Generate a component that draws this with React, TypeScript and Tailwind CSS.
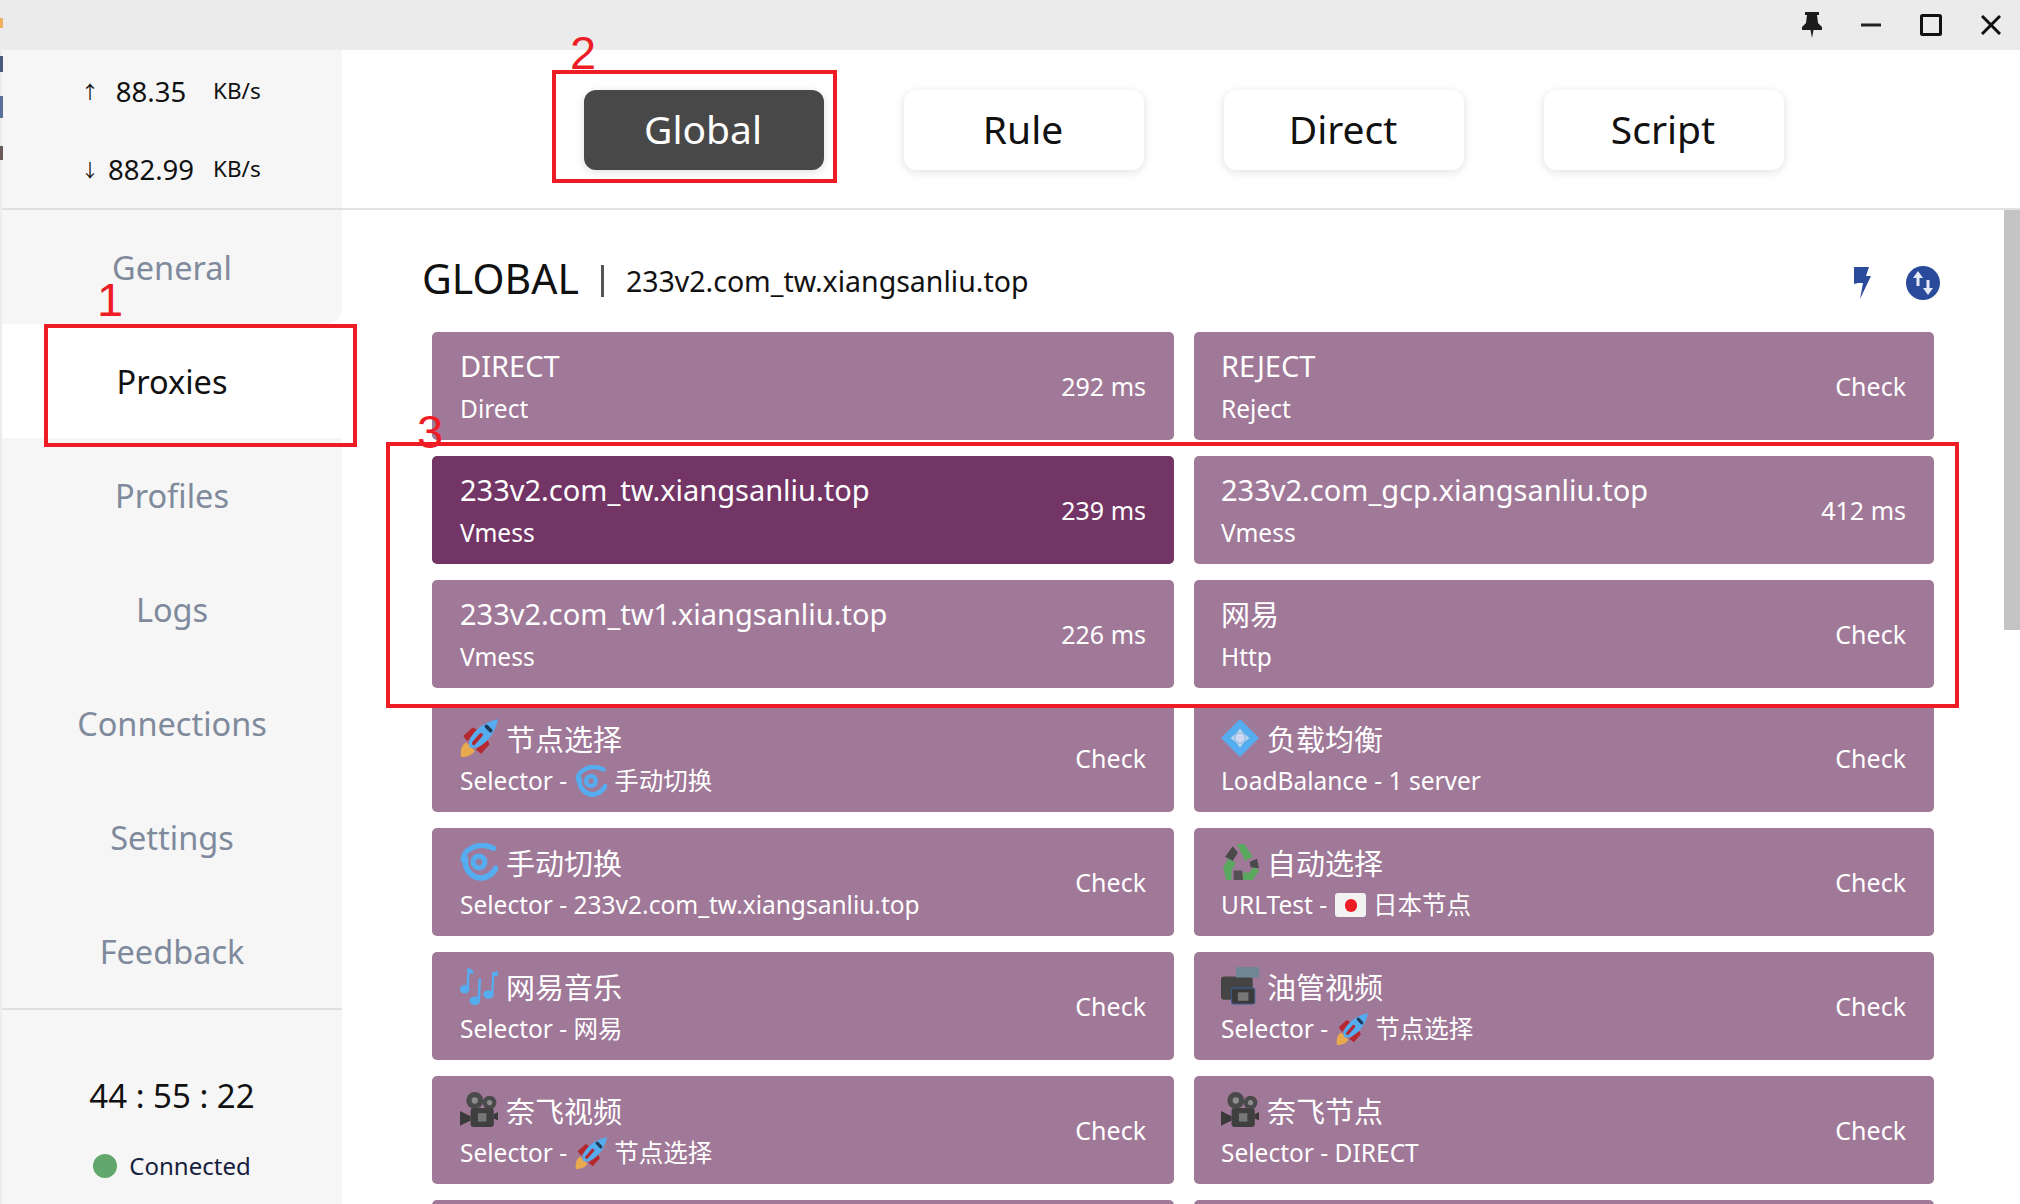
import React from "react";

const Rocket = ({ s }: { s: number }) => (
  <svg width={s} height={s} viewBox="0 0 36 36" className="shrink-0">
    <path d="M1 36c-1-7 1-12 5-14l8 8c-2 4-7 6-13 6z" fill="#e8a94f" />
    <path d="M3 16l9-8 4 2-9 11zM20 33l8-9-2-4-11 9z" fill="#b5282f" />
    <path d="M9 27C6 17 19 4 36 0 33 17 19 30 9 27z" fill="#55acee" />
    <path d="M25 7l4 4" stroke="#1f3b57" strokeWidth="3.500" strokeLinecap="round" />
    <path d="M13 23l7-8" stroke="#b5282f" strokeWidth="3.500" strokeLinecap="round" />
  </svg>
);
const Cyclone = ({ s }: { s: number }) => (
  <svg width={s} height={s} viewBox="0 0 36 36" className="shrink-0" fill="none" stroke="#55acee">
    <circle cx="18" cy="18" r="5.500" strokeWidth="5" />
    <path d="M3 16C3 6 18-2 32 5" strokeWidth="5" strokeLinecap="round" />
    <path d="M5 15c-1 12 8 19 17 18 5-1 9-4 12-9" strokeWidth="5.500" strokeLinecap="round" />
  </svg>
);
const Diamond = ({ s }: { s: number }) => (
  <svg width={s} height={s} viewBox="0 0 36 36" className="shrink-0">
    <path d="M18 0l18 18-18 18L0 18z" fill="#55acee" />
    <path d="M18 9l4 5 5 4-5 4-4 5-4-5-5-4 5-4z" fill="#b9d4ee" />
    <circle cx="18" cy="18" r="5" fill="#cfd8ee" stroke="#8bb8e0" />
  </svg>
);
const Recycle = ({ s }: { s: number }) => (
  <svg width={s} height={s} viewBox="0 0 36 36" className="shrink-0">
    <path d="M15 1l7 0 8 12-7 4z" fill="#5aa85f" />
    <path d="M11 3l5 6-5 8-7-4z" fill="#4a4a4a" />
    <path d="M2 23l5-8 7 4-4 7 0 9-5 0z" fill="#5aa85f" />
    <path d="M12 26l0 9 9 0-1-9z" fill="#4a4a4a" opacity="0.9" />
    <path d="M21 35l9 0 6-9-5-4-4 6-6 0z" fill="#5aa85f" />
    <path d="M27 18l7-3 2 9-8-1z" fill="#4a4a4a" />
  </svg>
);
const Notes = ({ s }: { s: number }) => (
  <svg width={s} height={s} viewBox="0 0 36 36" className="shrink-0">
    <g fill="#55acee">
      <ellipse cx="4.500" cy="21" rx="4.500" ry="4" />
      <path d="M6 21L7 1c3 0 6 2 6 6-2-1-3-1-4-1L8.500 21z" />
      <ellipse cx="14" cy="32" rx="5" ry="4" />
      <path d="M16.500 32l1-21 2.500 0-1 21z" />
      <ellipse cx="27" cy="26" rx="5" ry="4" />
      <path d="M29.500 26l1-21c2 0 3-1 5.500-1l0 4-3.500 1-1 17z" />
    </g>
  </svg>
);
const MovieCam = ({ s }: { s: number }) => (
  <svg width={s} height={s} viewBox="0 0 36 36" className="shrink-0">
    <circle cx="14" cy="9" r="8" fill="#4a4a4a" />
    <circle cx="28" cy="11" r="6.500" fill="#4a4a4a" />
    <circle cx="14" cy="9" r="3" fill="#8c8c8c" />
    <circle cx="28" cy="11" r="2.500" fill="#8c8c8c" />
    <rect x="10" y="16" width="22" height="18" rx="3" fill="#3f3f3f" />
    <rect x="17" y="21" width="8" height="8" fill="#777" />
    <path d="M0 19l10 5v4l-10 5z" fill="#3a3a3a" />
    <path d="M32 22l4-2v8l-4-2z" fill="#3a3a3a" />
  </svg>
);
const VideoCam = ({ s }: { s: number }) => (
  <svg width={s} height={s} viewBox="0 0 36 36" className="shrink-0">
    <rect x="0" y="9" width="30" height="22" rx="3" fill="#444" />
    <rect x="14" y="0" width="22" height="10" fill="#6f8795" />
    <rect x="10" y="20" width="22" height="15" rx="2" fill="#3a3a3a" stroke="#3b5b8c" />
    <rect x="16" y="24" width="10" height="8" fill="#777" />
  </svg>
);
const Flag = () => (
  <span className="w-[31px] h-[24px] bg-[#f2f2f2] rounded-[3px] flex items-center justify-center shrink-0">
    <span className="w-[12px] h-[13px] bg-[#ee1c25] rounded-full" />
  </span>
);

type Row = { title: React.ReactNode; sub: React.ReactNode; right: string; active?: boolean };

const T = ({ icon, text }: { icon: React.ReactNode; text: string }) => (
  <span className="flex items-center gap-[8px]">{icon}<span className="mt-[3px]">{text}</span></span>
);
const S = ({ pre, icon, text }: { pre: string; icon: React.ReactNode; text: string }) => (
  <span className="flex items-center">
    <span className="whitespace-pre">{pre}</span>
    <span className="ml-[8px] mr-[7px] flex">{icon}</span>
    <span>{text}</span>
  </span>
);

const rows: Row[] = [
  { title: "DIRECT", sub: "Direct", right: "292 ms" },
  { title: "REJECT", sub: "Reject", right: "Check" },
  { title: "233v2.com_tw.xiangsanliu.top", sub: "Vmess", right: "239 ms", active: true },
  { title: "233v2.com_gcp.xiangsanliu.top", sub: "Vmess", right: "412 ms" },
  { title: "233v2.com_tw1.xiangsanliu.top", sub: "Vmess", right: "226 ms" },
  { title: <span className="mt-[2px]">网易</span>, sub: "Http", right: "Check" },
  { title: <T icon={<Rocket s={38} />} text="节点选择" />, sub: <S pre="Selector -" icon={<Cyclone s={32} />} text="手动切换" />, right: "Check" },
  { title: <T icon={<Diamond s={38} />} text="负载均衡" />, sub: "LoadBalance - 1 server", right: "Check" },
  { title: <T icon={<Cyclone s={38} />} text="手动切换" />, sub: "Selector - 233v2.com_tw.xiangsanliu.top", right: "Check" },
  { title: <T icon={<Recycle s={38} />} text="自动选择" />, sub: <S pre="URLTest -" icon={<Flag />} text="日本节点" />, right: "Check" },
  { title: <T icon={<Notes s={38} />} text="网易音乐" />, sub: "Selector - 网易", right: "Check" },
  { title: <T icon={<VideoCam s={38} />} text="油管视频" />, sub: <S pre="Selector -" icon={<Rocket s={32} />} text="节点选择" />, right: "Check" },
  { title: <T icon={<MovieCam s={38} />} text="奈飞视频" />, sub: <S pre="Selector -" icon={<Rocket s={32} />} text="节点选择" />, right: "Check" },
  { title: <T icon={<MovieCam s={38} />} text="奈飞节点" />, sub: "Selector - DIRECT", right: "Check" },
  { title: "", sub: "", right: "" },
  { title: "", sub: "", right: "" },
];

const nav = ["General", "Proxies", "Profiles", "Logs", "Connections", "Settings", "Feedback"];
const modes = ["Global", "Rule", "Direct", "Script"];

export default function App() {
  return (
    <div className="relative w-[2020px] h-[1204px] overflow-hidden bg-white flex flex-col text-[#111] font-['Noto_Sans','Noto_Sans_CJK_SC',sans-serif]">
      {/* title bar */}
      <div className="h-[50px] shrink-0 bg-[#ebebeb] flex items-center justify-end pr-[19px] gap-[39px]">
        <svg width="20" height="26" viewBox="0 0 20 26" fill="#1c1c1c">
          <path d="M3 0h14v3h-2l1 8 4 4v3H0v-3l4-4 1-8H3zM8.500 18h3L10 26z" />
        </svg>
        <svg width="20" height="20" viewBox="0 0 20 20"><path d="M0 10h20" stroke="#222" strokeWidth="3" /></svg>
        <svg width="22" height="22" viewBox="0 0 22 22" fill="none"><rect x="1.500" y="1.500" width="19" height="19" rx="1" stroke="#111" strokeWidth="3" /></svg>
        <svg width="20" height="20" viewBox="0 0 20 20"><path d="M1 1l18 18M19 1L1 19" stroke="#111" strokeWidth="3" /></svg>
      </div>

      <div className="flex flex-1 min-h-0">
        {/* sidebar */}
        <div className="w-[342px] shrink-0 border-l-[2px] border-[#ececec] flex flex-col">
          <div className="h-[160px] shrink-0 bg-[#f6f6f6] border-b-[2px] border-[#e2dfe2] flex flex-col justify-center gap-[46px] pt-[3px]">
            {[["↑", "88.35"], ["↓", "882.99"]].map(([a, v]) => (
              <div key={v} className="flex items-center h-[32px] pl-[79px]">
                <span className="w-[12px] text-center text-[18px] leading-none">{a}</span>
                <span className="w-[116px] text-center text-[27.500px] leading-none">{v}</span>
                <span className="text-[22.500px] leading-none ml-[4px]">KB/s</span>
              </div>
            ))}
          </div>
          <div className="flex flex-col">
            {nav.map((n) => (
              <div
                key={n}
                className={
                  n === "Proxies"
                    ? "h-[114px] pt-[2px] bg-white flex items-center justify-center text-[32.500px] text-[#111]"
                    : n === "General"
                    ? "h-[114px] pt-[2px] bg-[#f6f6f6] rounded-br-[16px] flex items-center justify-center text-[32.500px] text-[#7f8a9c]"
                    : "h-[114px] pt-[2px] bg-[#f6f6f6] flex items-center justify-center text-[32.500px] text-[#7f8a9c]"
                }
              >
                {n}
              </div>
            ))}
          </div>
          <div className="flex-1 bg-[#f6f6f6] border-t-[2px] border-[#e2dfe2] flex flex-col items-center pt-[61px]">
            <div className="text-[33px] leading-[50px]">44 : 55 : 22</div>
            <div className="mt-[24px] flex items-center gap-[12px] text-[24px] leading-[42px] text-[#16213e]">
              <span className="w-[24px] h-[24px] rounded-full bg-[#62a76c]" />
              Connected
            </div>
          </div>
        </div>

        {/* main */}
        <div className="flex-1 min-w-0 flex flex-col">
          <div className="h-[160px] shrink-0 border-b-[2px] border-[#e2e2e2] flex items-start pt-[40px] pl-[242px] gap-[80px]">
            {modes.map((m) => (
              <div
                key={m}
                className={
                  m === "Global"
                    ? "w-[240px] h-[80px] pb-[2px] pr-[2px] rounded-[12px] bg-[#484848] text-white flex items-center justify-center text-[39px] shadow-[0_2px_10px_rgba(0,0,0,0.12)]"
                    : "w-[240px] h-[80px] pb-[2px] pr-[2px] rounded-[12px] bg-white text-[#111] flex items-center justify-center text-[39px] shadow-[0_2px_10px_rgba(0,0,0,0.12)]"
                }
              >
                {m}
              </div>
            ))}
          </div>
          <div className="flex-1 min-h-0 flex overflow-hidden">
            <div className="flex-1 min-w-0 overflow-hidden">
              <div className="h-[122px] flex items-center pl-[80px] pr-[64px] pt-[14px]">
                <span className="text-[41px] leading-none">GLOBAL</span>
                <span className="ml-[22px] mt-[6px] w-[3px] h-[32px] bg-[#555]" />
                <span className="ml-[22px] mt-[6px] text-[28.500px] leading-none">233v2.com_tw.xiangsanliu.top</span>
                <svg width="20" height="32" viewBox="0 0 20 32" className="ml-auto mt-[10px]" fill="#2a4a9c">
                  <path d="M2 0h15l-3 9h5L8 32l3-16H6L2 17z" />
                </svg>
                <svg width="34" height="34" viewBox="0 0 34 34" className="ml-[34px] mt-[10px]">
                  <circle cx="17" cy="17" r="17" fill="#2a4a9c" />
                  <path d="M12 5l-5 7h3.500v8h3v-8H17zM22 29l5-7h-3.500v-8h-3v8H17z" fill="#e6ebf7" />
                </svg>
              </div>
              <div className="ml-[90px] grid grid-cols-[742px_740px] gap-x-[20px] gap-y-[16px] text-white">
                {rows.map((r, i) => (
                  <div
                    key={i}
                    className={
                      r.active
                        ? "h-[108px] rounded-[5px] bg-[#723566] flex items-center justify-between px-[28px]"
                        : i % 2 === 1
                        ? "h-[108px] rounded-[5px] bg-[#a07898] flex items-center justify-between pl-[27px] pr-[28px]"
                        : "h-[108px] rounded-[5px] bg-[#a07898] flex items-center justify-between px-[28px]"
                    }
                  >
                    <div className="flex flex-col min-w-0">
                      <div className="text-[29px] leading-[42px] h-[42px] flex items-center">{r.title}</div>
                      <div className="text-[24.500px] leading-[40px] h-[40px] pt-[4px] flex items-center">{r.sub}</div>
                    </div>
                    <div className="text-[25px] leading-none">{r.right}</div>
                  </div>
                ))}
              </div>
            </div>
            <div className="w-[16px] shrink-0">
              <div className="h-[420px] bg-[#c4c4c4]" />
            </div>
          </div>
        </div>
      </div>

      {/* clipped neighbouring window at the left edge */}
      <div className="absolute left-0 top-[18px] w-[3px] h-[10px] bg-[#f0b060]" />
      <div className="absolute left-0 top-[56px] w-[3px] h-[16px] bg-[#4a5a7a]" />
      <div className="absolute left-0 top-[96px] w-[3px] h-[22px] bg-[#5a6f9a]" />
      <div className="absolute left-0 top-[146px] w-[3px] h-[14px] bg-[#6a5a5a]" />

      {/* annotations */}
      <div className="absolute left-[44px] top-[324px] w-[313px] h-[123px] border-[4px] border-[#ee1c25]" />
      <div className="absolute left-[552px] top-[70px] w-[285px] h-[113px] border-[4px] border-[#ee1c25]" />
      <div className="absolute left-[386px] top-[442px] w-[1573px] h-[266px] border-[4px] border-[#ee1c25]" />
      <span className="absolute left-[97px] top-[276px] text-[47px] leading-none text-[#ee1c25] font-['Liberation_Sans',sans-serif]">1</span>
      <span className="absolute left-[570px] top-[29px] text-[47px] leading-none text-[#ee1c25] font-['Liberation_Sans',sans-serif]">2</span>
      <span className="absolute left-[417px] top-[408px] text-[47px] leading-none text-[#ee1c25] font-['Liberation_Sans',sans-serif]">3</span>
    </div>
  );
}
